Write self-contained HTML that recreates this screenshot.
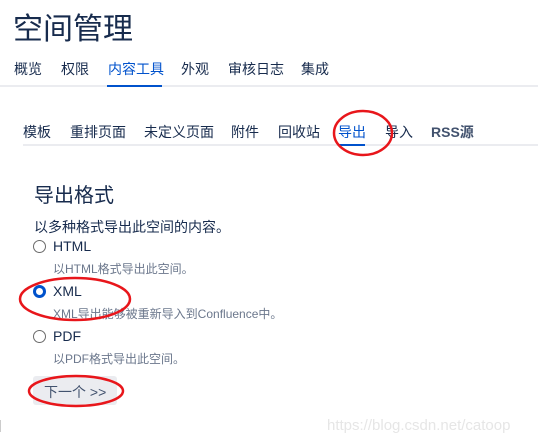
<!DOCTYPE html>
<html><head><meta charset="utf-8"><style>
body{margin:0;width:538px;height:446px;background:#fff;font-family:"Liberation Sans","Noto Sans CJK SC",sans-serif;color:#172b4d;position:relative;overflow:hidden}
.a{position:absolute;white-space:nowrap}
.r{position:absolute;width:13px;height:13px;border:1px solid #6b6b6b;border-radius:50%;box-sizing:border-box;background:#fff}
</style></head><body>
<div class="a" style="left:13px;top:4px;font-size:30px;color:#172b4d">空间管理</div>
<div class="a" style="left:14px;top:59px;font-size:14px">
<span style="position:absolute;left:0">概览</span><span style="position:absolute;left:47px">权限</span><span style="position:absolute;left:94px;color:#0052cc">内容工具</span><span style="position:absolute;left:167px">外观</span><span style="position:absolute;left:214px">审核日志</span><span style="position:absolute;left:287px">集成</span></div>
<div class="a" style="left:0;top:85px;width:538px;height:2px;background:#ebecf0"></div>
<div class="a" style="left:107px;top:85px;width:55px;height:2px;background:#0052cc"></div>
<div class="a" style="left:23px;top:122px;font-size:14px">
<span style="position:absolute;left:0">模板</span><span style="position:absolute;left:47px">重排页面</span><span style="position:absolute;left:121px">未定义页面</span><span style="position:absolute;left:208px">附件</span><span style="position:absolute;left:255px">回收站</span><span style="position:absolute;left:315px;color:#0052cc">导出</span><span style="position:absolute;left:362px">导入</span><span style="position:absolute;left:408px;font-weight:bold;color:#42526e">RSS源</span></div>
<div class="a" style="left:23px;top:144px;width:515px;height:2px;background:#ebecf0"></div>
<div class="a" style="left:338px;top:144px;width:27px;height:2px;background:#0052cc"></div>
<div class="a" style="left:34px;top:179px;font-size:20px">导出格式</div>
<div class="a" style="left:34px;top:217px;font-size:14px">以多种格式导出此空间的内容。</div>
<div class="r" style="left:33px;top:240px"></div>
<div class="a" style="left:53px;top:238px;font-size:14px">HTML</div>
<div class="a" style="left:53px;top:260px;font-size:12px;color:#6b778c">以HTML格式导出此空间。</div>
<div class="r" style="left:33px;top:285px;border:3px solid #0052cc"></div>
<div class="a" style="left:53px;top:283px;font-size:14px">XML</div>
<div class="a" style="left:53px;top:305px;font-size:12px;color:#6b778c">XML导出能够被重新导入到Confluence中。</div>
<div class="r" style="left:33px;top:330px"></div>
<div class="a" style="left:53px;top:328px;font-size:14px">PDF</div>
<div class="a" style="left:53px;top:350px;font-size:12px;color:#6b778c">以PDF格式导出此空间。</div>
<div class="a" style="left:33px;top:376px;width:84px;height:29px;background:#ebecf0;border-radius:3px"></div>
<div class="a" style="left:44px;top:382px;font-size:14px;color:#42526e">下一个 &gt;&gt;</div>
<div class="a" style="left:327px;top:417px;font-size:15px;color:#e6e6e6">https://blog.csdn.net/catoop</div>
<div class="a" style="left:0;top:420px;width:1px;height:12px;background:#ccc"></div>
<svg class="a" style="left:0;top:0" width="538" height="446"><g fill="none" stroke="#e8161b" stroke-width="2.5">
<ellipse cx="363" cy="133" rx="29" ry="22"/>
<ellipse cx="75" cy="299" rx="55" ry="21"/>
<ellipse cx="76" cy="391" rx="47" ry="15"/></g></svg>
</body></html>
